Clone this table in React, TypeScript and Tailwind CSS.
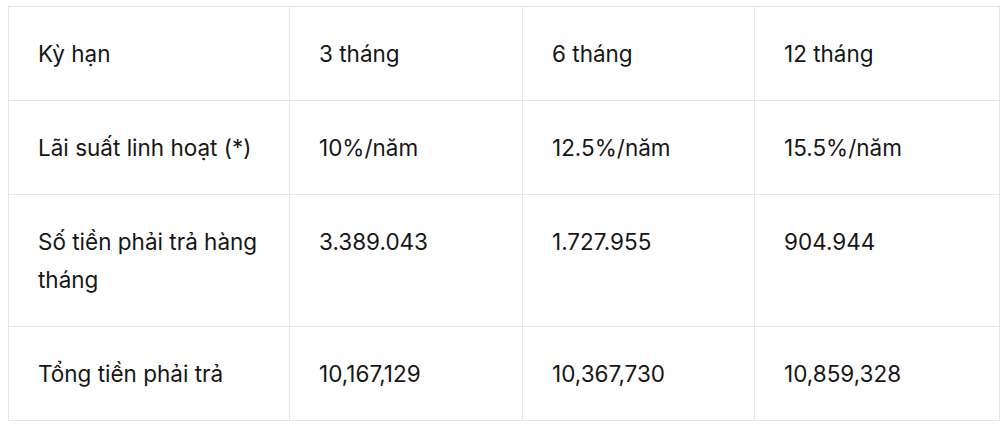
const rows: string[][] = [
  ['Kỳ hạn', '3 tháng', '6 tháng', '12 tháng'],
  ['Lãi suất linh hoạt (*)', '10%/năm', '12.5%/năm', '15.5%/năm'],
  ['Số tiền phải trả hàng tháng', '3.389.043', '1.727.955', '904.944'],
  ['Tổng tiền phải trả', '10,167,129', '10,367,730', '10,859,328'],
];

export default function App() {
  return (
    <div className="w-[1000px] h-[432px] bg-white pl-[8px] pt-[6px]" style={{ fontFamily: 'Inter, "Noto Sans", sans-serif' }}>
      <table className="border-collapse table-fixed w-[991px] text-[22.5px] leading-[38px] text-[#161616]">
        <colgroup>
          <col className="w-[281px]" />
          <col className="w-[233px]" />
          <col className="w-[232px]" />
          <col className="w-[245px]" />
        </colgroup>
        <tbody>
          {rows.map((row, i) => (
            <tr key={i}>
              {row.map((cell, j) => (
                <td key={j} className="border border-[#e6e6e6] align-top px-[29px] py-[27.5px]">
                  {cell}
                </td>
              ))}
            </tr>
          ))}
        </tbody>
      </table>
    </div>
  );
}
